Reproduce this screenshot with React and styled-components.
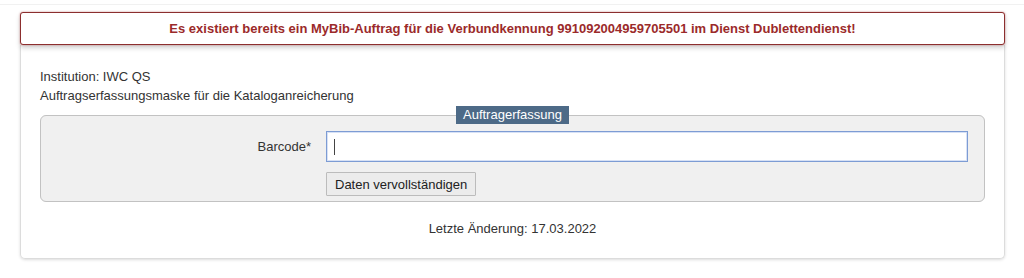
import React from 'react';
import styled, { createGlobalStyle } from 'styled-components';

const GlobalStyle = createGlobalStyle`
  body {
    margin: 0;
    background: #fff;
    font-family: "Liberation Sans", Arial, sans-serif;
    color: #333;
  }
`;

const Page = styled.div`
  padding: 0 19px 20px 20px;
`;

const TopRule = styled.div`
  height: 4px;
  border-bottom: 1px solid #f1f1f1;
  margin: 0 -20px 7px;
`;

const Alert = styled.div`
  position: relative;
  z-index: 1;
  height: 31px;
  display: flex;
  align-items: center;
  justify-content: center;
  border: 1px solid #8c2e2e;
  border-radius: 3px;
  background: #fff;
  box-shadow: 0 0 2px rgba(170, 50, 50, 0.55), 0 3px 5px rgba(0, 0, 0, 0.18);
  color: #9b2a2a;
  font-size: 13px;
  font-weight: bold;
`;

const Panel = styled.div`
  border: 1px solid #dcdcdc;
  border-top: none;
  border-radius: 0 0 5px 5px;
  box-shadow: 0 1px 3px rgba(0, 0, 0, 0.14);
  padding: 22px 19px 20px;
  font-size: 13px;
  line-height: 19px;
`;

const Line = styled.div``;

const Fieldset = styled.fieldset`
  margin: 1px 0 0;
  padding: 7px 16px 5px;
  background: #f0f0f0;
  border: 1px solid #c2c2c2;
  border-radius: 6px;
  display: grid;
  grid-template-columns: 254px 1fr;
  column-gap: 15px;
  row-gap: 10px;
  align-items: center;
`;

const Legend = styled.legend`
  margin: 0 auto;
  padding: 0 7px;
  height: 18px;
  line-height: 18px;
  background: #4d6a87;
  color: #fff;
  font-size: 13px;
`;

const Label = styled.label`
  text-align: right;
  font-size: 13px;
`;

const InputWrap = styled.div`
  position: relative;
  height: 31px;
`;

const Input = styled.input`
  box-sizing: border-box;
  width: 100%;
  height: 31px;
  border: 1px solid #7d9cd4;
  box-shadow: inset 0 0 0 1px rgba(140, 170, 225, 0.35);
  background: #fff;
  outline: none;
  padding: 0 8px;
  font: inherit;
`;

const Caret = styled.span`
  position: absolute;
  left: 8px;
  top: 8px;
  width: 1px;
  height: 16px;
  background: #444;
`;

const Button = styled.button`
  grid-column: 2;
  justify-self: start;
  height: 24px;
  padding: 0 8px;
  background: #ececec;
  border: 1px solid #bcbcbc;
  border-radius: 1px;
  color: #222;
  font-family: "Liberation Sans", Arial, sans-serif;
  font-size: 13px;
`;

const Footer = styled.div`
  margin-top: 17px;
  text-align: center;
`;

export default function App() {
  return (
    <Page>
      <GlobalStyle />
      <TopRule />
      <Alert>
        Es existiert bereits ein MyBib-Auftrag für die Verbundkennung 991092004959705501 im Dienst Dublettendienst!
      </Alert>
      <Panel>
        <Line>Institution: IWC QS</Line>
        <Line>Auftragserfassungsmaske für die Kataloganreicherung</Line>
        <Fieldset>
          <Legend>Auftragerfassung</Legend>
          <Label htmlFor="barcode">Barcode*</Label>
          <InputWrap>
            <Input id="barcode" type="text" />
            <Caret />
          </InputWrap>
          <Button type="button">Daten vervollständigen</Button>
        </Fieldset>
        <Footer>Letzte Änderung: 17.03.2022</Footer>
      </Panel>
    </Page>
  );
}
